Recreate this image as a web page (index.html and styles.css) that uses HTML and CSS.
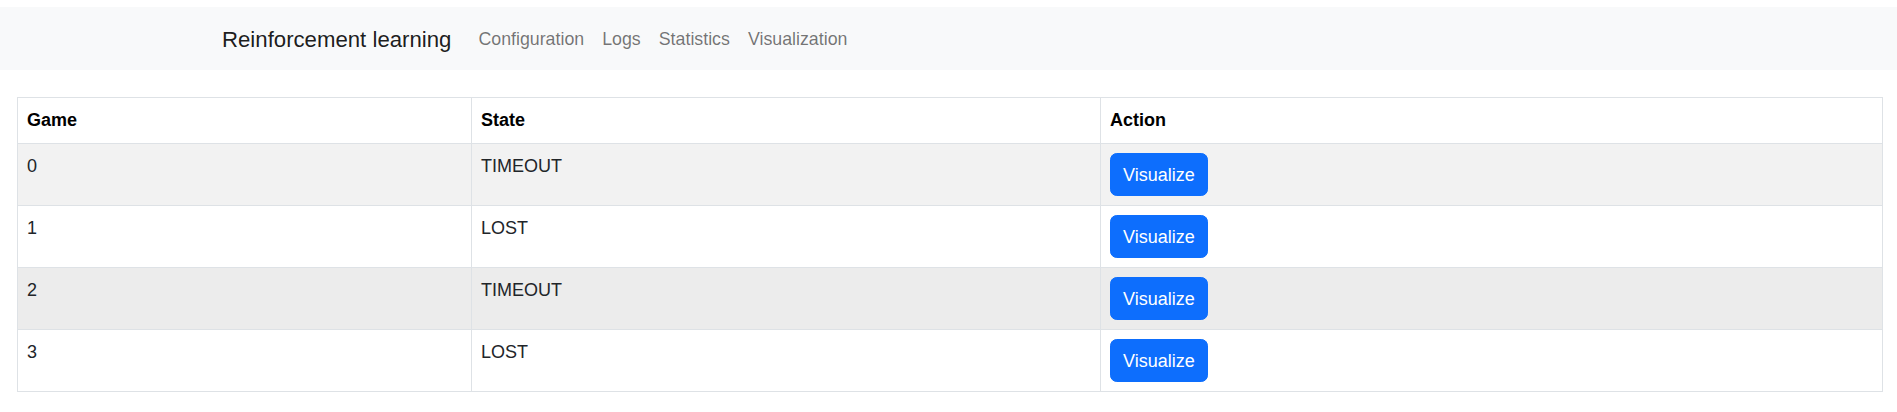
FILE: index.html
```html
<!DOCTYPE html>
<html lang="en">
<head>
<meta charset="utf-8">
<title>Reinforcement learning</title>
<link rel="stylesheet" href="styles.css">
</head>
<body>
<nav class="navbar">
  <a class="brand" href="#">Reinforcement learning</a>
  <ul class="nav">
    <li><a class="nav-link" href="#">Configuration</a></li>
    <li><a class="nav-link" href="#">Logs</a></li>
    <li><a class="nav-link" href="#">Statistics</a></li>
    <li><a class="nav-link" href="#">Visualization</a></li>
  </ul>
</nav>
<main class="main">
  <table class="games">
    <colgroup>
      <col class="col-game">
      <col class="col-state">
      <col class="col-action">
    </colgroup>
    <thead>
      <tr><th>Game</th><th>State</th><th>Action</th></tr>
    </thead>
    <tbody>
      <tr class="striped"><td>0</td><td>TIMEOUT</td><td><button class="btn">Visualize</button></td></tr>
      <tr><td>1</td><td>LOST</td><td><button class="btn">Visualize</button></td></tr>
      <tr class="hovered"><td>2</td><td>TIMEOUT</td><td><button class="btn">Visualize</button></td></tr>
      <tr><td>3</td><td>LOST</td><td><button class="btn">Visualize</button></td></tr>
    </tbody>
  </table>
</main>
</body>
</html>
```

FILE: styles.css
```css
* { box-sizing: border-box; }

body {
  margin: 0;
  font-family: "Liberation Sans", Arial, sans-serif;
  font-size: 18px;
  line-height: 27px;
  color: #212529;
  background: #fff;
}

.navbar {
  margin-top: 7px;
  height: 63px;
  background: #f8f9fa;
  display: flex;
  align-items: center;
  padding-left: 222px;
  padding-top: 2px;
}

.brand {
  font-size: 22.2px;
  line-height: 34px;
  color: rgba(0, 0, 0, 0.9);
  text-decoration: none;
  margin-right: 18px;
}

.nav {
  list-style: none;
  margin: 0;
  padding: 0;
  display: flex;
}

.nav-link {
  display: block;
  padding: 0 9px;
  color: rgba(0, 0, 0, 0.55);
  text-decoration: none;
  font-size: 17.8px;
}

.main {
  margin: 27px 14px 0 17px;
}

.games {
  width: 100%;
  border-collapse: collapse;
  table-layout: fixed;
  border: 1px solid #dee2e6;
}

.col-game { width: 454px; }
.col-state { width: 629px; }

.games th,
.games td {
  border: 1px solid #dee2e6;
  padding: 9px 9px;
  text-align: left;
  vertical-align: top;
}

.games th {
  font-weight: bold;
  color: #000;
}

.games tr.striped td { background: #f2f2f2; }
.games tr.hovered td { background: #ececec; }

.btn {
  display: inline-block;
  vertical-align: top;
  height: 43px;
  padding: 0 12px;
  border: 1px solid #0d6efd;
  border-radius: 6.75px;
  background: #0d6efd;
  color: #fff;
  font-family: inherit;
  font-size: 18px;
  line-height: 40px;
  cursor: pointer;
}
```
